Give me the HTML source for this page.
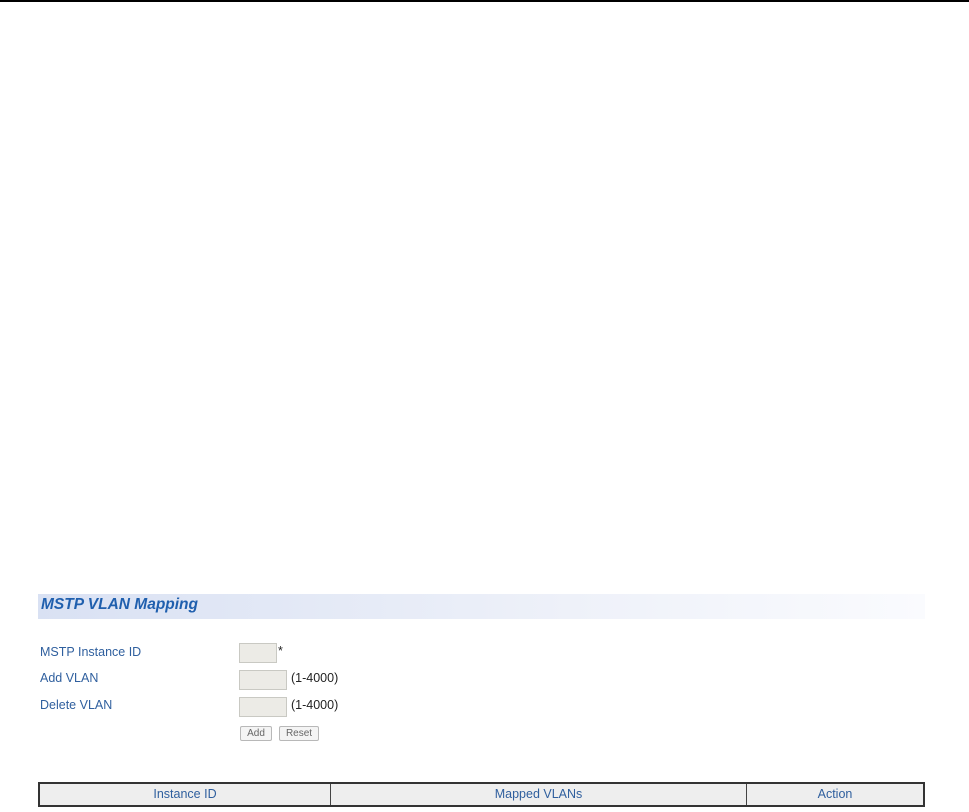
<!DOCTYPE html>
<html><head><style>
body{margin:0;width:969px;height:812px;background:#fff;position:relative;font-family:"Liberation Sans",Arial,sans-serif;overflow:hidden}
.a{position:absolute}
.lbl{font-size:12.5px;color:#2f5f9e;left:40px}
.inp{background:#ecebe6;border:1px solid #c9c9c3;height:18px}
.btn{border:1px solid #b8b8b8;border-radius:2px;background:#f4f4f4;color:#666;font-size:10px;text-align:center;line-height:13px;height:13px;top:726px}
.txt{font-size:12.5px;color:#222}
</style></head><body>
<div class="a" style="left:0;top:0;width:969px;height:1.5px;background:#000"></div>
<div class="a" style="left:38px;top:594px;width:887px;height:25px;background:linear-gradient(to right,#d9e1f3,#eef1f9 60%,#fafbfe)"></div>
<div class="a" style="left:41px;top:596px;font-size:15.5px;font-weight:bold;font-style:italic;color:#1f5fae">MSTP VLAN Mapping</div>
<div class="a lbl" style="top:645px">MSTP Instance ID</div>
<div class="a lbl" style="top:671px">Add VLAN</div>
<div class="a lbl" style="top:698px">Delete VLAN</div>
<div class="a inp" style="left:239px;top:643px;width:36px"></div>
<div class="a txt" style="left:278px;top:644px">*</div>
<div class="a inp" style="left:239px;top:670px;width:46px"></div>
<div class="a txt" style="left:291px;top:671px">(1-4000)</div>
<div class="a inp" style="left:239px;top:697px;width:46px"></div>
<div class="a txt" style="left:291px;top:698px">(1-4000)</div>
<div class="a btn" style="left:240px;width:30px">Add</div>
<div class="a btn" style="left:279px;width:38px">Reset</div>
<div class="a" style="left:38px;top:782px;width:883px;height:21px;border:2px solid #333;background:#eeeeee;font-size:12.5px;color:#2f5f9e;line-height:21px">
<div class="a" style="left:0;width:290px;text-align:center">Instance ID</div>
<div class="a" style="left:290px;width:1px;height:21px;background:#444"></div>
<div class="a" style="left:291px;width:415px;text-align:center">Mapped VLANs</div>
<div class="a" style="left:706px;width:1px;height:21px;background:#444"></div>
<div class="a" style="left:707px;width:176px;text-align:center">Action</div>
</div>
</body></html>
